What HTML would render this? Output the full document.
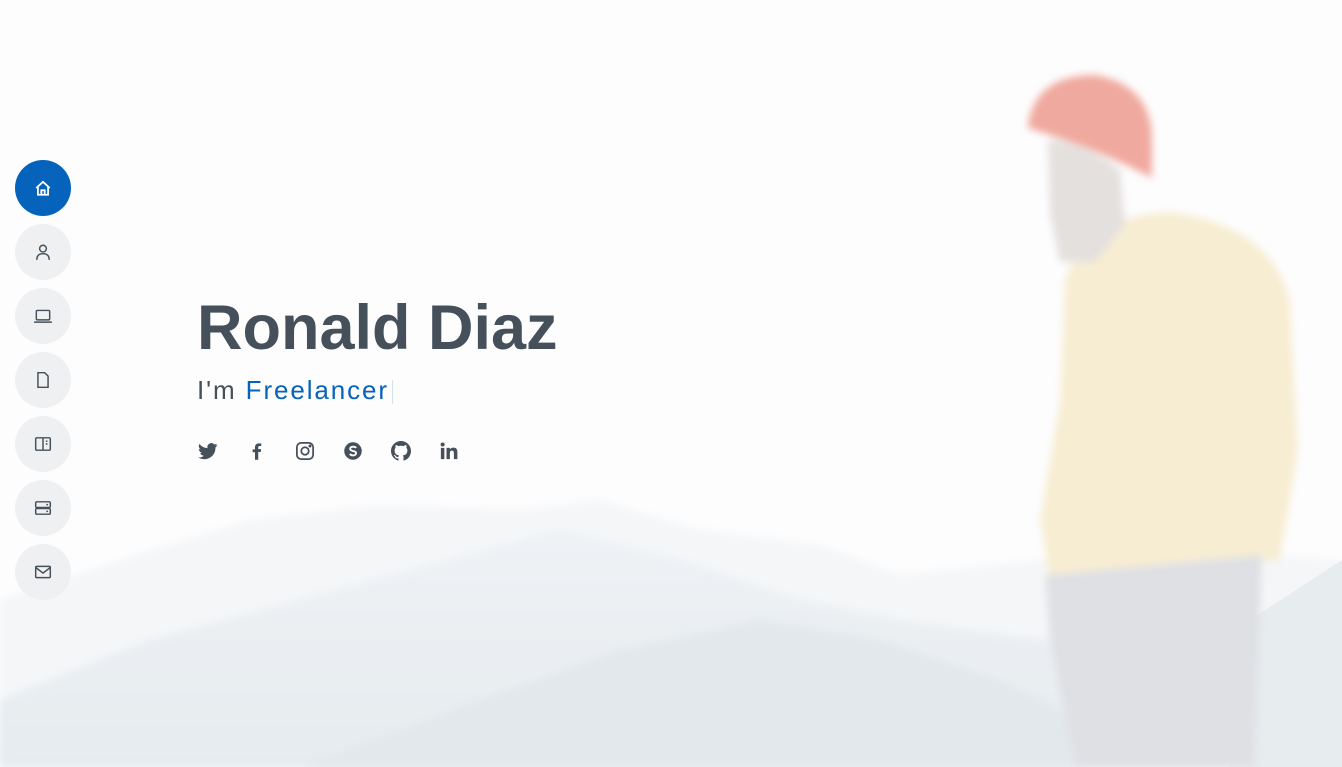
<!DOCTYPE html>
<html><head><meta charset="utf-8"><style>
html,body{margin:0;padding:0;width:1342px;height:767px;overflow:hidden;font-family:"Liberation Sans",sans-serif}
body{position:relative;background:#fdfdfe}
.bg{position:absolute;inset:0}
.nav{position:absolute;left:15px;top:160px}
.nav div{width:56px;height:56px;border-radius:50%;background:#eff0f2;margin-bottom:8px;display:flex;align-items:center;justify-content:center}
.nav div.act{background:#0563bb}
h1{position:absolute;left:197px;top:292px;margin:0;font-size:63px;font-weight:bold;color:#45505b;letter-spacing:0}
.sub{position:absolute;left:197px;top:375px;font-size:26px;color:#45505b;letter-spacing:1.9px}
.sub span{color:#0563bb}
.sub i{display:inline-block;width:1px;height:24px;background:#cfe0f0;vertical-align:middle;margin-left:3px}
.soc{position:absolute;top:441px}
</style></head><body>
<svg class="bg" width="1342" height="767">
<defs>
<linearGradient id="h" x1="0" y1="0" x2="0" y2="1"><stop offset="0" stop-color="#eef2f5"/><stop offset="1" stop-color="#e6ebef"/></linearGradient>
<filter id="b"><feGaussianBlur stdDeviation="4"/></filter>
</defs>
<path d="M0 600 L120 560 L250 520 L380 505 L520 510 L600 500 L700 530 L820 545 L900 575 L1040 560 L1120 545 L1342 560 L1342 767 L0 767Z" fill="#f4f6f8" filter="url(#b)"/>
<path d="M0 700 L150 640 L300 600 L450 560 L560 530 L680 560 L800 600 L900 620 L1040 640 L1342 620 L1342 767 L0 767Z" fill="url(#h)" filter="url(#b)"/>
<path d="M300 767 L480 700 L620 650 L760 620 L880 640 L1000 680 L1080 720 L1080 767Z" fill="#e3e8ec" filter="url(#b)"/>
<path d="M1250 620 L1342 560 L1342 767 L1230 767Z" fill="#e7ecef"/>
<g filter="url(#b)">
<path d="M1065 280 Q1090 215 1170 212 Q1270 225 1290 300 L1298 450 L1280 560 L1050 580 L1040 520 L1060 400Z" fill="#f7edd2"/>
<path d="M1045 575 L1262 555 L1255 767 L1075 767 L1050 640Z" fill="#dfe0e4"/>
<path d="M1048 140 Q1080 140 1120 170 L1125 225 L1095 262 L1060 262 L1050 215Z" fill="#e4e0de"/>
<path d="M1028 125 Q1035 75 1095 75 Q1152 85 1152 140 L1152 178 Q1100 150 1028 128Z" fill="#f0a99e"/>
</g>
</svg>
<div class="nav">
<div class="act"><svg width="18" height="18" viewBox="0 0 16 16" fill="none" stroke="#fff" stroke-width="1.6"><path d="M2 8 L8 2.5 L14 8 M3.5 6.8 V14 H12.5 V6.8 M6.5 14 V10 H9.5 V14"/></svg></div>
<div><svg width="18" height="18" viewBox="0 0 16 16" fill="none" stroke="#45505b" stroke-width="1.3"><circle cx="8" cy="5" r="3"/><path d="M2.5 15 Q2.5 9.5 8 9.5 Q13.5 9.5 13.5 15"/></svg></div>
<div><svg width="20" height="18" viewBox="0 0 18 16" fill="none" stroke="#45505b" stroke-width="1.3"><rect x="3" y="3" width="12" height="8.5" rx="1"/><path d="M1 13.5 H17"/></svg></div>
<div><svg width="18" height="18" viewBox="0 0 16 16" fill="none" stroke="#45505b" stroke-width="1.3"><path d="M3.5 1.5 H9.5 L12.5 4.5 V14.5 H3.5Z"/></svg></div>
<div><svg width="18" height="18" viewBox="0 0 16 16" fill="none" stroke="#45505b" stroke-width="1.3"><rect x="1.5" y="2.5" width="13" height="11" rx="1"/><path d="M8 2.5 V13.5 M10.5 5.5 H12 M10.5 8 H12"/></svg></div>
<div><svg width="18" height="18" viewBox="0 0 16 16" fill="none" stroke="#45505b" stroke-width="1.3"><rect x="1.5" y="2.5" width="13" height="5" rx="1"/><rect x="1.5" y="8.5" width="13" height="5" rx="1"/><path d="M11 5 H12.5 M11 11 H12.5"/></svg></div>
<div><svg width="18" height="18" viewBox="0 0 16 16" fill="none" stroke="#45505b" stroke-width="1.3"><rect x="1.5" y="3" width="13" height="10" rx="1"/><path d="M1.5 4 L8 9 L14.5 4"/></svg></div>
</div>
<h1>Ronald Diaz</h1>
<div class="sub">I'm <span>Freelancer</span><i></i></div>
<svg class="soc" style="left:198px" width="20" height="20" viewBox="0 0 16 16" fill="#45505b"><path d="M15.5 3.2c-.6.3-1.2.4-1.8.5.7-.4 1.1-1 1.4-1.7-.6.4-1.3.6-2 .8a3.2 3.2 0 0 0-5.5 2.9A9 9 0 0 1 1.1 2.4a3.2 3.2 0 0 0 1 4.3c-.5 0-1-.2-1.4-.4 0 1.6 1.1 2.9 2.6 3.2-.5.1-1 .2-1.5.1.4 1.3 1.6 2.2 3 2.2A6.5 6.5 0 0 1 0 13.1 9 9 0 0 0 14 5.5v-.4c.6-.5 1.1-1 1.5-1.7z"/></svg>
<svg class="soc" style="left:247px" width="20" height="20" viewBox="0 0 16 16" fill="#45505b"><path d="M9 15V8.8h2l.3-2.3H9V5.1c0-.7.2-1.1 1.1-1.1h1.3V2c-.2 0-1-.1-1.9-.1-1.9 0-3.1 1.1-3.1 3.2v1.6H4.5v2.3h1.9V15z"/></svg>
<svg class="soc" style="left:295px" width="20" height="20" viewBox="0 0 16 16" fill="none" stroke="#45505b" stroke-width="1.4"><rect x="1.5" y="1.5" width="13" height="13" rx="3.5"/><circle cx="8" cy="8" r="3"/><circle cx="12" cy="4" r=".5" fill="#45505b"/></svg>
<svg class="soc" style="left:343px" width="20" height="20" viewBox="0 0 16 16"><circle cx="8" cy="8" r="7" fill="#45505b"/><path d="M10.5 5.5c-.5-.8-1.5-1-2.5-1-1.3 0-2.3.7-2.3 1.8 0 2.3 4.8 1.2 4.8 3.4 0 1-1 1.8-2.5 1.8-1.2 0-2-.4-2.5-1.2" fill="none" stroke="#fff" stroke-width="1.5"/></svg>
<svg class="soc" style="left:391px" width="20" height="20" viewBox="0 0 16 16" fill="#45505b"><path d="M8 0C3.6 0 0 3.6 0 8c0 3.5 2.3 6.5 5.5 7.6.4.1.5-.2.5-.4v-1.4c-2.2.5-2.7-1-2.7-1-.4-.9-.9-1.2-.9-1.2-.7-.5.1-.5.1-.5.8.1 1.2.8 1.2.8.7 1.2 1.9.9 2.3.7.1-.5.3-.9.5-1.1-1.8-.2-3.6-.9-3.6-4 0-.9.3-1.6.8-2.1-.1-.2-.4-1 .1-2.1 0 0 .7-.2 2.2.8a7.5 7.5 0 0 1 4 0c1.5-1 2.2-.8 2.2-.8.4 1.1.2 1.9.1 2.1.5.6.8 1.3.8 2.1 0 3.1-1.9 3.8-3.6 4 .3.3.5.8.5 1.5v2.2c0 .2.1.5.6.4A8 8 0 0 0 16 8c0-4.4-3.6-8-8-8z"/></svg>
<svg class="soc" style="left:439px" width="20" height="20" viewBox="0 0 16 16" fill="#45505b"><rect x="1.5" y="5.5" width="2.8" height="9"/><circle cx="2.9" cy="2.8" r="1.6"/><path d="M6 5.5h2.7v1.3c.4-.8 1.4-1.5 2.8-1.5 2.9 0 3.2 1.9 3.2 4.3v4.9h-2.8v-4.4c0-1 0-2.4-1.5-2.4s-1.7 1.1-1.7 2.3v4.5H6z"/></svg>
</body></html>
